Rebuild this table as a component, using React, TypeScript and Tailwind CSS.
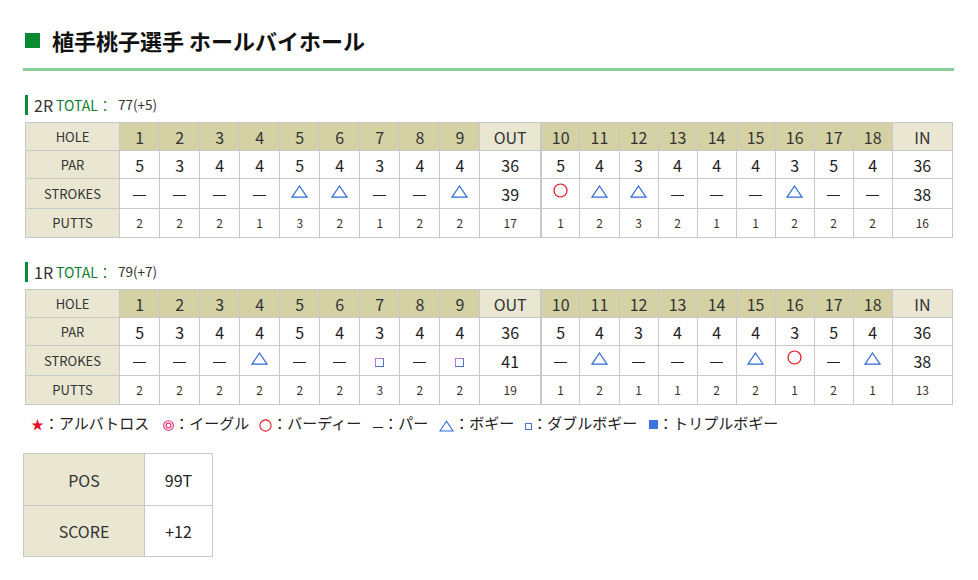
import React from "react";

type Mark = "-" | "bo" | "bi" | "db" | "eg" | "al" | "tb";

type Round = {
  name: string;
  total: string;
  strokes: Mark[];
  out: number;
  inn: number;
  putts: number[];
  puttOut: number;
  puttIn: number;
};

const PAR = [5, 3, 4, 4, 5, 4, 3, 4, 4, 5, 4, 3, 4, 4, 4, 3, 5, 4];

const ROUNDS: Round[] = [
  {
    name: "2R",
    total: "77(+5)",
    strokes: ["-", "-", "-", "-", "bo", "bo", "-", "-", "bo", "bi", "bo", "bo", "-", "-", "-", "bo", "-", "-"],
    out: 39,
    inn: 38,
    putts: [2, 2, 2, 1, 3, 2, 1, 2, 2, 1, 2, 3, 2, 1, 1, 2, 2, 2],
    puttOut: 17,
    puttIn: 16,
  },
  {
    name: "1R",
    total: "79(+7)",
    strokes: ["-", "-", "-", "bo", "-", "-", "db", "-", "db", "-", "bo", "-", "-", "-", "bo", "bi", "-", "bo"],
    out: 41,
    inn: 38,
    putts: [2, 2, 2, 2, 2, 2, 3, 2, 2, 1, 2, 1, 1, 2, 2, 1, 2, 1],
    puttOut: 19,
    puttIn: 13,
  },
];

const FONT = "font-['Noto_Sans_CJK_JP','Noto_Sans',sans-serif]";

function Triangle({ w = 17, h = 13 }: { w?: number; h?: number }) {
  return (
    <svg width={w} height={h} viewBox="0 0 17 13" className="inline-block">
      <path d="M8.5 1 L16 12.2 L1 12.2 Z" fill="none" stroke="#2f6ad8" strokeWidth="1.2" />
    </svg>
  );
}

function Circle({ size = 15 }: { size?: number }) {
  return (
    <svg width={size} height={size} viewBox="0 0 15 15" className="inline-block">
      <circle cx="7.5" cy="7.5" r="6.5" fill="none" stroke="#e8101c" strokeWidth="1.2" />
    </svg>
  );
}

function DoubleCircle() {
  return (
    <svg width="11" height="11" viewBox="0 0 11 11" className="inline-block">
      <circle cx="5.5" cy="5.5" r="4.8" fill="none" stroke="#e8306c" strokeWidth="1.1" />
      <circle cx="5.5" cy="5.5" r="2.4" fill="none" stroke="#e8306c" strokeWidth="1.1" />
    </svg>
  );
}

function Square() {
  return <span className="inline-block h-[9px] w-[9px] border border-[#4a72d8] border-l-[#c070d0] border-t-[#c070d0]" />;
}

function Dash() {
  return <span className="inline-block h-[1.5px] w-[13px] bg-[#222]" />;
}

function StrokeMark({ m }: { m: Mark }) {
  if (m === "bo")
    return (
      <div className="flex h-full items-end justify-center pb-[10px]">
        <Triangle />
      </div>
    );
  if (m === "bi")
    return (
      <div className="flex h-full items-start justify-center pt-[4px]">
        <Circle />
      </div>
    );
  if (m === "db")
    return (
      <div className="flex h-full items-center justify-center pt-[3px]">
        <Square />
      </div>
    );
  return (
    <div className="flex h-full items-end justify-center pb-[12px]">
      <Dash />
    </div>
  );
}

const td = "border border-[#c8c8c8] p-0 text-center";
const label = `${td} bg-[#e9e7d2] text-[13px] text-[#333]`;

function ScoreTable({ r }: { r: Round }) {
  const front = [0, 1, 2, 3, 4, 5, 6, 7, 8];
  const back = [9, 10, 11, 12, 13, 14, 15, 16, 17];
  return (
    <table className="w-[928px] table-fixed border-collapse">
      <colgroup>
        <col className="w-[94px]" />
        {front.map((i) => (
          <col key={i} className="w-[40px]" />
        ))}
        <col className="w-[61px]" />
        {back.map((i) => (
          <col key={i} className="w-[39px]" />
        ))}
        <col className="w-[60px]" />
      </colgroup>
      <tbody>
        <tr className="h-[28px]">
          <td className={label}>HOLE</td>
          {front.map((i) => (
            <td key={i} className={`${td} bg-[#d4d1a4] text-[16px] text-[#333]`}>{i + 1}</td>
          ))}
          <td className={`${td} border-r-2 bg-[#e9e7d2] text-[16px] text-[#333]`}>OUT</td>
          {back.map((i) => (
            <td key={i} className={`${td} bg-[#d4d1a4] text-[16px] text-[#333]`}>{i + 1}</td>
          ))}
          <td className={`${td} bg-[#e9e7d2] text-[16px] text-[#333]`}>IN</td>
        </tr>
        <tr className="h-[28px]">
          <td className={label}>PAR</td>
          {front.map((i) => (
            <td key={i} className={`${td} text-[16px] text-[#222]`}>{PAR[i]}</td>
          ))}
          <td className={`${td} border-r-2 text-[16px] text-[#222]`}>36</td>
          {back.map((i) => (
            <td key={i} className={`${td} text-[16px] text-[#222]`}>{PAR[i]}</td>
          ))}
          <td className={`${td} text-[16px] text-[#222]`}>36</td>
        </tr>
        <tr className="h-[30px]">
          <td className={label}>STROKES</td>
          {front.map((i) => (
            <td key={i} className={`${td} h-[30px]`}>
              <StrokeMark m={r.strokes[i]} />
            </td>
          ))}
          <td className={`${td} border-r-2 text-[16px] text-[#222]`}>{r.out}</td>
          {back.map((i) => (
            <td key={i} className={`${td} h-[30px]`}>
              <StrokeMark m={r.strokes[i]} />
            </td>
          ))}
          <td className={`${td} text-[16px] text-[#222]`}>{r.inn}</td>
        </tr>
        <tr className="h-[29px]">
          <td className={label}>PUTTS</td>
          {front.map((i) => (
            <td key={i} className={`${td} text-[12px] text-[#3a2f2a]`}>{r.putts[i]}</td>
          ))}
          <td className={`${td} border-r-2 text-[12px] text-[#3a2f2a]`}>{r.puttOut}</td>
          {back.map((i) => (
            <td key={i} className={`${td} text-[12px] text-[#3a2f2a]`}>{r.putts[i]}</td>
          ))}
          <td className={`${td} text-[12px] text-[#3a2f2a]`}>{r.puttIn}</td>
        </tr>
      </tbody>
    </table>
  );
}

function RoundBlock({ r }: { r: Round }) {
  return (
    <div className="ml-[2px]">
      <div className="flex h-[20px] items-center border-l-[3px] border-[#0d8a34] pl-[6px] leading-none">
        <span className="text-[16px] text-[#333]">{r.name}</span>
        <span className="ml-[3px] text-[14px] text-[#0d7f2f]">TOTAL：</span>
        <span className="ml-[6px] text-[13.5px] text-[#333]">{r.total}</span>
      </div>
      <div className="mt-[7px]">
        <ScoreTable r={r} />
      </div>
    </div>
  );
}

export default function App() {
  return (
    <div className={`${FONT} h-[580px] w-[978px] bg-white pl-[23px] pt-[29px] text-[#333]`}>
      {/* title */}
      <div className="flex items-center">
        <span className="ml-[2px] inline-block h-[15px] w-[15px] bg-[#0a8a33]" />
        <h1 className="ml-[12px] text-[22px] font-bold leading-[22px] text-[#111]">植手桃子選手 ホールバイホール</h1>
      </div>
      <div className="mt-[17px] h-[3px] w-[931px] bg-[#8ccb9c]" />

      <div className="mt-[24px]">
        <RoundBlock r={ROUNDS[0]} />
      </div>
      <div className="mt-[24px]">
        <RoundBlock r={ROUNDS[1]} />
      </div>

      {/* legend */}
      <div className="ml-[8px] mt-[6px] flex items-center text-[15px] leading-[20px] text-[#222]">
        <span className="mt-[2px] text-[13px] text-[#e5102a]">★</span>
        <span>：アルバトロス</span>
        <span className="ml-[14px] mt-[5px] flex">
          <DoubleCircle />
        </span>
        <span>：イーグル</span>
        <span className="ml-[10px] mt-[3px]">
          <Circle size={13} />
        </span>
        <span>：バーディー</span>
        <span className="ml-[12px] mt-[10px] inline-block h-[1px] w-[10px] bg-[#222]" />
        <span>：パー</span>
        <span className="ml-[11px] mt-[3px]">
          <Triangle w={15} h={12} />
        </span>
        <span>：ボギー</span>
        <span className="ml-[11px] mt-[7px] inline-block h-[7px] w-[7px] border border-[#4a72d8]" />
        <span>：ダブルボギー</span>
        <span className="ml-[12px] mt-[4px] inline-block h-[9px] w-[9px] bg-[#3d74e0]" />
        <span>：トリプルボギー</span>
      </div>

      {/* summary */}
      <table className="mt-[19px] w-[189px] table-fixed border-collapse text-[16px]">
        <colgroup>
          <col className="w-[121px]" />
          <col className="w-[68px]" />
        </colgroup>
        <tbody>
          <tr className="h-[52px]">
            <td className="border border-[#c8c8c8] bg-[#e9e7d2] text-center text-[#333]">POS</td>
            <td className="border border-[#c8c8c8] text-center text-[#222]">99T</td>
          </tr>
          <tr className="h-[51px]">
            <td className="border border-[#c8c8c8] bg-[#e9e7d2] text-center text-[#333]">SCORE</td>
            <td className="border border-[#c8c8c8] text-center text-[#222]">+12</td>
          </tr>
        </tbody>
      </table>
    </div>
  );
}
